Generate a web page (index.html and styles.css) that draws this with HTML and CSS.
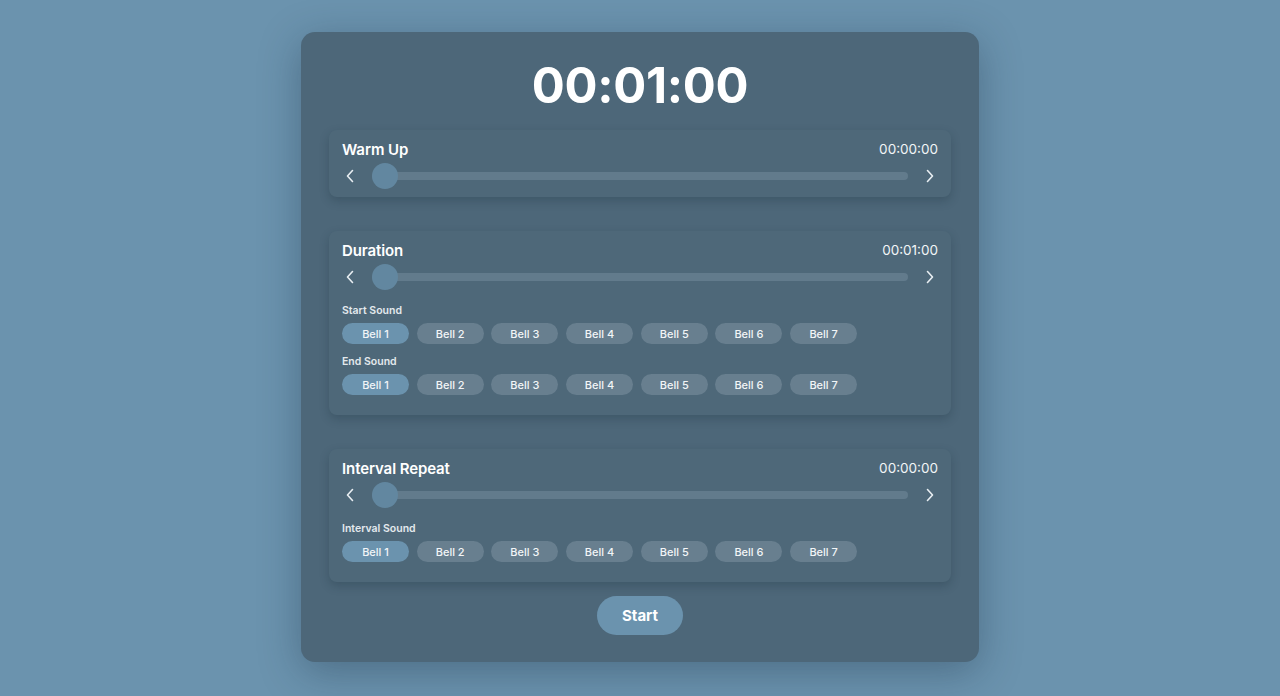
FILE: index.html
```html
<!DOCTYPE html>
<html>
<head>
<meta charset="utf-8">
<link rel="stylesheet" href="styles.css">
</head>
<body>
<div class="card">
  <div class="timer">00:01:00</div>

  <section class="panel">
    <div class="head"><span class="title">Warm Up</span><span class="time">00:00:00</span></div>
    <div class="slider-row">
      <span class="chev"><svg width="10" height="14" viewBox="0 0 10 14"><path d="M7.5 1.5 L2.5 7 L7.5 12.5" fill="none" stroke="#e8eef2" stroke-width="1.6" stroke-linecap="round" stroke-linejoin="round"/></svg></span>
      <div class="track"><span class="thumb"></span></div>
      <span class="chev"><svg width="10" height="14" viewBox="0 0 10 14"><path d="M2.5 1.5 L7.5 7 L2.5 12.5" fill="none" stroke="#e8eef2" stroke-width="1.6" stroke-linecap="round" stroke-linejoin="round"/></svg></span>
    </div>
  </section>

  <section class="panel sounds">
    <div class="head"><span class="title">Duration</span><span class="time">00:01:00</span></div>
    <div class="slider-row">
      <span class="chev"><svg width="10" height="14" viewBox="0 0 10 14"><path d="M7.5 1.5 L2.5 7 L7.5 12.5" fill="none" stroke="#e8eef2" stroke-width="1.6" stroke-linecap="round" stroke-linejoin="round"/></svg></span>
      <div class="track"><span class="thumb"></span></div>
      <span class="chev"><svg width="10" height="14" viewBox="0 0 10 14"><path d="M2.5 1.5 L7.5 7 L2.5 12.5" fill="none" stroke="#e8eef2" stroke-width="1.6" stroke-linecap="round" stroke-linejoin="round"/></svg></span>
    </div>
    <div class="label first">Start Sound</div>
    <div class="bells">
      <button class="bell active">Bell 1</button><button class="bell">Bell 2</button><button class="bell">Bell 3</button><button class="bell">Bell 4</button><button class="bell">Bell 5</button><button class="bell">Bell 6</button><button class="bell">Bell 7</button>
    </div>
    <div class="label">End Sound</div>
    <div class="bells">
      <button class="bell active">Bell 1</button><button class="bell">Bell 2</button><button class="bell">Bell 3</button><button class="bell">Bell 4</button><button class="bell">Bell 5</button><button class="bell">Bell 6</button><button class="bell">Bell 7</button>
    </div>
  </section>

  <section class="panel sounds">
    <div class="head"><span class="title">Interval Repeat</span><span class="time">00:00:00</span></div>
    <div class="slider-row">
      <span class="chev"><svg width="10" height="14" viewBox="0 0 10 14"><path d="M7.5 1.5 L2.5 7 L7.5 12.5" fill="none" stroke="#e8eef2" stroke-width="1.6" stroke-linecap="round" stroke-linejoin="round"/></svg></span>
      <div class="track"><span class="thumb"></span></div>
      <span class="chev"><svg width="10" height="14" viewBox="0 0 10 14"><path d="M2.5 1.5 L7.5 7 L2.5 12.5" fill="none" stroke="#e8eef2" stroke-width="1.6" stroke-linecap="round" stroke-linejoin="round"/></svg></span>
    </div>
    <div class="label first">Interval Sound</div>
    <div class="bells">
      <button class="bell active">Bell 1</button><button class="bell">Bell 2</button><button class="bell">Bell 3</button><button class="bell">Bell 4</button><button class="bell">Bell 5</button><button class="bell">Bell 6</button><button class="bell">Bell 7</button>
    </div>
  </section>

  <div class="start-wrap"><button class="start">Start</button></div>
</div>
</body>
</html>
```
FILE: styles.css
```css
* { box-sizing: border-box; }
html, body { margin: 0; padding: 0; }
body {
  background: #6b93ae;
  font-family: Inter, "Noto Sans", sans-serif;
  color: #ffffff;
  height: 696px;
  overflow: hidden;
  padding-top: 32px;
}
.card {
  width: 678px;
  height: 630px;
  margin: 0 auto;
  background: #4d6779;
  border-radius: 14px;
  box-shadow: 0 10px 40px rgba(20, 40, 60, 0.35);
  padding: 26px 28px 0;
}
.timer {
  height: 56px;
  line-height: 56px;
  text-align: center;
  font-size: 49px;
  font-weight: 700;
  letter-spacing: -0.3px;
  margin-bottom: 16px;
}
.panel {
  background: #4e6879;
  border-radius: 8px;
  box-shadow: 0 4px 10px rgba(25, 45, 60, 0.28);
  padding: 9px 13px 8px;
  margin-bottom: 34px;
}
.panel.sounds { padding-bottom: 20px; }
.head {
  display: flex;
  justify-content: space-between;
  align-items: center;
  height: 20px;
}
.title { font-size: 15px; font-weight: 600; letter-spacing: -0.1px; }
.time { font-size: 13.5px; font-weight: 400; color: #f2f5f7; }
.slider-row {
  display: flex;
  align-items: center;
  gap: 14px;
  height: 26px;
  margin-top: 4px;
}
.chev {
  width: 16px;
  display: flex;
  justify-content: center;
  align-items: center;
}
.track {
  flex: 1;
  height: 8px;
  border-radius: 4px;
  background: #627b8c;
  position: relative;
}
.thumb {
  position: absolute;
  left: 0;
  top: -9px;
  width: 26px;
  height: 26px;
  border-radius: 50%;
  background: #6287a0;
}
.label {
  font-size: 10.5px;
  font-weight: 600;
  color: #e3e9ed;
  height: 14px;
  line-height: 14px;
  margin-top: 11px;
}
.label.first { margin-top: 14px; }
.bells {
  display: flex;
  gap: 7.7px;
  margin-top: 5px;
}
.bell {
  width: 67px;
  height: 21px;
  border: none;
  border-radius: 11px;
  background: #687f8f;
  color: #f2f5f7;
  font-family: Inter, "Noto Sans", sans-serif;
  font-size: 11px;
  font-weight: 500;
  padding: 0;
}
.bell.active { background: #6b93ae; }
.start-wrap {
  display: flex;
  justify-content: center;
  margin-top: -20px;
}
.start {
  width: 86px;
  height: 39px;
  border: none;
  border-radius: 20px;
  background: #6b93ae;
  color: #ffffff;
  font-family: Inter, "Noto Sans", sans-serif;
  font-size: 15px;
  font-weight: 700;
}
```
